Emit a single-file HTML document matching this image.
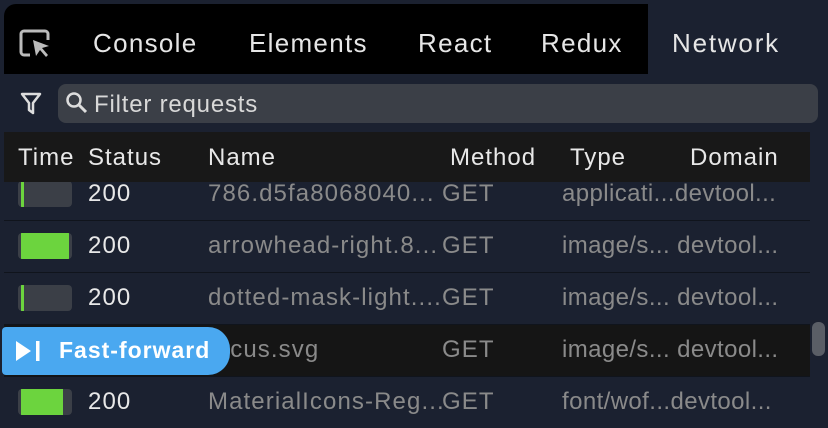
<!DOCTYPE html>
<html><head><style>
body{margin:0;width:828px;height:427px;background:#1b2130;overflow:hidden;position:relative;font-family:"Liberation Sans",sans-serif;}
.abs{position:absolute}
.tabs{left:4px;top:4px;width:804px;height:70px;background:#000;border-radius:12px 12px 0 0}
.tab{position:absolute;top:24px;font-size:26px;color:#e6e6e6;letter-spacing:1.3px}
.row{position:absolute;left:4px;width:806px;height:51px;border-bottom:1.5px solid #10141c}
.t{position:absolute;font-size:24px;top:11px;letter-spacing:1.1px}
.ty{letter-spacing:.4px}
.w{color:#e8e8e8}.g{color:#8a8a8a}
.bar{position:absolute;left:14px;top:12px;width:54px;height:26px;background:#3b3f47;border-radius:4px;overflow:hidden}
.bar i{position:absolute;left:3px;top:0;bottom:0;background:#6cd43e}
.h{position:absolute;top:12px;font-size:24px;color:#e8e8e8;letter-spacing:1px}
</style></head><body>
<div class="abs tabs">
 <svg class="abs" style="left:14px;top:24px" width="36" height="32" viewBox="0 0 36 32"><path d="M12 27H6a3 3 0 0 1-3-3V6a3 3 0 0 1 3-3h21a3 3 0 0 1 3 3v6" fill="none" stroke="#bbb" stroke-width="3"/><path d="M15 12l16 6-7 2 6 7-2 2-6-7-4 6z" fill="#bbb"/></svg>
 <div class="tab" style="left:89px">Console</div>
 <div class="tab" style="left:245px">Elements</div>
 <div class="tab" style="left:414px">React</div>
 <div class="tab" style="left:537px">Redux</div>
 <div class="abs" style="left:644px;top:0;width:160px;height:70px;background:#1b2130"></div>
 <div class="tab" style="left:668px;letter-spacing:1.8px">Network</div>
</div>
<svg class="abs" style="left:20px;top:92px" width="22" height="24" viewBox="0 0 22 24"><path d="M2 2h18l-7 9v10l-4-3v-7z" fill="none" stroke="#ddd" stroke-width="2.5" stroke-linejoin="round"/></svg>
<div class="abs" style="left:58px;top:84px;width:760px;height:39px;background:#3b3f47;border-radius:8px"></div>
<svg class="abs" style="left:65px;top:91px" width="24" height="24" viewBox="0 0 24 24"><circle cx="9" cy="9" r="6.5" fill="none" stroke="#ddd" stroke-width="2.5"/><path d="M14 14l7 7" stroke="#ddd" stroke-width="3"/></svg>
<div class="abs" style="left:94px;top:91px;font-size:24px;color:#d8d8d8;letter-spacing:.8px">Filter requests</div>
<div class="abs" style="left:4px;top:132px;width:806px;height:50px;background:#181818;z-index:2">
 <div class="h" style="left:14px">Time</div><div class="h" style="left:84px">Status</div><div class="h" style="left:204px">Name</div><div class="h" style="left:446px">Method</div><div class="h" style="left:566px">Type</div><div class="h" style="left:686px">Domain</div>
</div>
<div class="row" style="top:169px;height:51px"><div class="bar" style="top:12px"><i style="width:3px"></i></div><div class="t w" style="left:84px">200</div><div class="t g" style="left:204px">786.d5fa8068040...</div><div class="t g" style="left:438px">GET</div><div class="t g ty" style="left:558px">applicati...devtool...</div></div>
<div class="row" style="top:221px"><div class="bar"><i style="width:48px"></i></div><div class="t w" style="left:84px">200</div><div class="t g" style="left:204px">arrowhead-right.8...</div><div class="t g" style="left:438px">GET</div><div class="t g ty" style="left:558px">image/s... devtool...</div></div>
<div class="row" style="top:273px"><div class="bar"><i style="width:3px"></i></div><div class="t w" style="left:84px">200</div><div class="t g" style="left:204px">dotted-mask-light....</div><div class="t g" style="left:438px">GET</div><div class="t g ty" style="left:558px">image/s... devtool...</div></div>
<div class="row" style="top:325px;background:#151515"><div class="t g" style="left:204px">focus.svg</div><div class="t g" style="left:438px">GET</div><div class="t g ty" style="left:558px">image/s... devtool...</div></div>
<div class="row" style="top:377px;border:0"><div class="bar"><i style="width:42px"></i></div><div class="t w" style="left:84px">200</div><div class="t g" style="left:204px">MaterialIcons-Reg...</div><div class="t g" style="left:438px">GET</div><div class="t g ty" style="left:558px">font/wof...devtool...</div></div>
<div class="abs" style="left:2px;top:327px;width:228px;height:48px;background:#4aa8f0;border-radius:4px 22px 22px 4px">
 <svg class="abs" style="left:12px;top:13px" width="28" height="22" viewBox="0 0 28 22"><path d="M2 1l15 10-15 10z" fill="#fff"/><rect x="22" y="1" width="3.5" height="20" fill="#fff"/></svg>
 <div class="abs" style="left:57px;top:10px;font-size:23px;font-weight:bold;color:#fff;letter-spacing:1px">Fast-forward</div>
</div>
<div class="abs" style="left:812px;top:322px;width:13px;height:34px;background:#5a5e66;border-radius:6px"></div>
</body></html>
